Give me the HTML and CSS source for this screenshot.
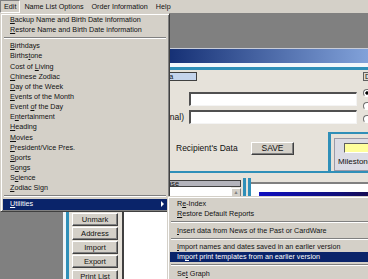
FILE: index.html
```html
<!DOCTYPE html>
<html lang="en">

<head>
  <meta charset="UTF-8" />
  <title>Edit - Utilities</title>
  <link rel="stylesheet" href="styles.css">
</head>

<body>
  <!-- 菜单栏 -->
  <div class="menubar">
    <span class="mb-item on">Edit</span>
    <span class="mb-item">Name List Options</span>
    <span class="mb-item">Order Information</span>
    <span class="mb-item">Help</span>
  </div>

  <!-- 背景里的窗口 -->
  <div class="desk">
    <div class="win">
      <div class="titlebar"></div>
      <div class="capline"></div>

      <div class="tabs">
        <span class="tab">Recipient Data</span>
        <span class="tab tab-d">D</span>
      </div>

      <div class="fields">
        <label class="lbl short">Name</label>
        <span class="input"></span>
        <div class="radios">
          <span class="radio sel"></span>
          <span class="radio"></span>
          <span class="radio"></span>
        </div>
        <label class="lbl">Name (Optional)</label>
        <span class="input"></span>
      </div>

      <div class="mid">
        <div class="recip">
          <span class="rlabel">Recipient's Data</span>
          <span class="btn save">SAVE</span>
        </div>
        <div class="milestone">
          <div class="ms-inner">
            <div class="yellow"></div>
            <div class="ms-text">Milestone</div>
          </div>
        </div>
      </div>

      <div class="lower">
        <div class="lp">
          <div class="btns">
            <span class="btn">Mark All</span>
            <span class="btn">Mark</span>
            <span class="btn">Unmark</span>
            <span class="btn">Address</span>
            <span class="btn">Import</span>
            <span class="btn">Export</span>
            <span class="btn">Print List</span>
          </div>
          <div class="list">
            <div class="list-head">Name Database</div>
            <div class="list-body">
              <div class="rows"></div>
              <div class="scroll"><span class="sb-btn">&#9650;</span></div>
            </div>
          </div>
        </div>
        <div class="rp">
          <div class="graph">
            <div class="bar"></div>
          </div>
        </div>
      </div>
    </div>
  </div>

  <!-- Edit 下拉菜单 -->
  <div class="menu dd">
    <div class="mi"><u>B</u>ackup Name and Birth Date information</div>
    <div class="mi"><u>R</u>estore Name and Birth Date information</div>
    <div class="sep"></div>
    <div class="mi"><u>B</u>irthdays</div>
    <div class="mi">Births<u>t</u>one</div>
    <div class="mi">Cost of <u>L</u>iving</div>
    <div class="mi"><u>C</u>hinese Zodiac</div>
    <div class="mi"><u>D</u>ay of the Week</div>
    <div class="mi"><u>E</u>vents of the Month</div>
    <div class="mi">Event <u>o</u>f the Day</div>
    <div class="mi">E<u>n</u>tertainment</div>
    <div class="mi"><u>H</u>eading</div>
    <div class="mi"><u>M</u>ovies</div>
    <div class="mi"><u>P</u>resident/Vice Pres.</div>
    <div class="mi"><u>S</u>ports</div>
    <div class="mi">S<u>o</u>ngs</div>
    <div class="mi">S<u>c</u>ience</div>
    <div class="mi"><u>Z</u>odiac Sign</div>
    <div class="sep"></div>
    <div class="mi hi arrow"><span><u>U</u>tilities</span><span class="tri"></span></div>
  </div>

  <!-- Utilities 子菜单 -->
  <div class="menu sub">
    <div class="mi">R<u>e</u>-Index</div>
    <div class="mi"><u>R</u>estore Default Reports</div>
    <div class="sep"></div>
    <div class="mi"><u>I</u>nsert data from News of the Past or CardWare</div>
    <div class="sep"></div>
    <div class="mi"><u>I</u>mport names and dates saved in an earlier version</div>
    <div class="mi hi">Im<u>p</u>ort print templates from an earlier version</div>
    <div class="sep"></div>
    <div class="mi">Se<u>t</u> Graph</div>
  </div>
</body>

</html>
```

FILE: styles.css
```css
* {
  margin: 0;
  padding: 0;
  box-sizing: border-box;
}

body {
  width: 368px;
  height: 279px;
  overflow: hidden;
  position: relative;
  background: #808080;
  font-family: "Liberation Sans", Arial, sans-serif;
  font-size: 7.2px;
  color: #111;
}

/* 菜单栏 */
.menubar {
  height: 13px;
  background: #d4d0c8;
  display: flex;
  align-items: center;
}

.mb-item {
  padding: 0 3px;
  border: 1px solid transparent;
  line-height: 11px;
  white-space: nowrap;
}

.mb-item.on {
  border-color: #808080 #fff #fff #808080;
}

/* 背景窗口 */
.desk {
  padding-top: 35px;
  padding-left: 63px;
}

.win {
  width: 330px;
  height: 240px;
  background: #e6e2da;
  border-left: 3px solid #eef4f8;
  border-top: 1px solid #c8ccd8;
  font-size: 8.5px;
}

.titlebar {
  height: 14px;
  background: linear-gradient(to right, #0a246a 25%, #8fb0e6 100%);
}

.capline {
  height: 7px;
  background: #f2f7fb;
  border-bottom: 3px solid #2f8fb8;
}

.tabs {
  display: flex;
  margin-top: 2px;
  height: 9px;
}

.tab {
  margin-left: 57px;
  width: 74px;
  background: #c4d4ec;
  border: 1px solid #404040;
  font-size: 7.2px;
  line-height: 7px;
  padding-left: 2px;
  white-space: nowrap;
  overflow: hidden;
}

.tab-d {
  margin-left: 166px;
  width: 12px;
  padding-left: 1px;
  background: #dcdad4;
  border-color: #606060;
}

.fields {
  display: grid;
  grid-template-columns: 118px 168px 12px;
  column-gap: 5px;
  row-gap: 4px;
  margin-top: 11px;
}

.lbl {
  text-align: right;
  line-height: 14px;
  white-space: nowrap;
}

.lbl.short {
  padding-right: 20px;
}

.input {
  height: 14px;
  background: #fff;
  border-top: 2px solid #505050;
  border-left: 2px solid #505050;
  border-right: 1px solid #f4f4f4;
  border-bottom: 1px solid #f4f4f4;
}

.radios {
  grid-column: 3;
  grid-row: 1 / span 2;
  display: flex;
  flex-direction: column;
  gap: 5px;
  margin-top: -3px;
  margin-left: 1px;
}

.radio {
  width: 8px;
  height: 8px;
  border-radius: 50%;
  border: 1px solid;
  border-color: #707070 #fff #fff #707070;
  background: #fff;
}

.radio.sel {
  background: radial-gradient(circle, #000 1.4px, #fff 1.9px);
}

/* 中间一行 */
.mid {
  display: flex;
  margin-top: 8px;
  height: 41px;
}

.recip {
  width: 262px;
  border-bottom: 2px solid #2f8fb8;
  display: flex;
  align-items: flex-start;
  padding: 10px 0 0 110px;
}

.rlabel {
  width: 75px;
  line-height: 13px;
  white-space: nowrap;
}

.btn {
  display: block;
  height: 13px;
  background: #d4d0c8;
  border: 1px solid;
  border-color: #fff #404040 #404040 #fff;
  box-shadow: inset -1px -1px #808080;
  text-align: center;
  line-height: 11px;
  white-space: nowrap;
}

.save {
  width: 43px;
}

.milestone {
  flex: 1;
  border-top: 2px solid #2f8fb8;
  border-left: 3px solid #2f8fb8;
  border-bottom: 2px solid #2f8fb8;
  padding: 4px 0 0 3px;
}

.ms-inner {
  height: 33px;
  background: #dcdce4;
  border: 1px solid #9a9aa8;
  padding: 4px 0 0 3px;
}

.yellow {
  margin-left: 6px;
  width: 40px;
  height: 10px;
  background: #ffff9c;
  border: 1px solid;
  border-color: #606060 #fff #fff #606060;
}

.ms-text {
  margin-top: 4px;
  font-size: 8px;
  line-height: 9px;
}

/* 下面两块 */
.lower {
  display: flex;
  margin-top: 5px;
  height: 110px;
}

.lp {
  width: 180px;
  border-left: 3px solid #2f8fb8;
  border-right: 3px solid #2f8fb8;
  display: flex;
  padding: 2px 2px 0 3px;
}

.btns {
  width: 46px;
  margin-top: 4px;
  display: flex;
  flex-direction: column;
  gap: 1.25px;
  font-size: 7.6px;
}

.list {
  margin-left: 4px;
  flex: 1;
  border-left: 2px solid #404040;
  background: #fff;
}

.list-head {
  height: 7px;
  background: #b4b4bc;
  border: 1px solid #404040;
  font-size: 7.2px;
  line-height: 5px;
  padding-left: 2px;
  white-space: nowrap;
  overflow: hidden;
}

.list-body {
  display: flex;
  height: 100px;
}

.rows {
  flex: 1;
}

.scroll {
  width: 10px;
  background: #e8e6e0;
  padding-top: 1px;
}

.sb-btn {
  display: block;
  height: 9px;
  background: #d4d0c8;
  border: 1px solid;
  border-color: #fff #808080 #808080 #fff;
  color: #808080;
  font-size: 5px;
  line-height: 7px;
  text-align: center;
}

.rp {
  margin-left: 2px;
  flex: 1;
  border-left: 3px solid #2f8fb8;
  padding-top: 4px;
}

.graph {
  height: 100px;
  background: #fff;
  border-top: 2px solid #808080;
  padding: 8px 0 0 8px;
}

.bar {
  height: 5px;
  background: linear-gradient(to right, #1010c0, #10107a 60%, #1a0830);
}

/* 弹出菜单 */
.menu {
  position: absolute;
  background: #d4d0c8;
  border: 1px solid;
  border-color: #d4d0c8 #404040 #404040 #d4d0c8;
  box-shadow: inset 1px 1px #fff, inset -1px -1px #808080;
  padding: 1px 2px;
}

.mi {
  height: 10.15px;
  line-height: 10px;
  padding-left: 7px;
  white-space: nowrap;
}

.mi.hi {
  background: #0a246a;
  color: #fff;
}

.arrow {
  display: flex;
  align-items: center;
  justify-content: space-between;
  padding-right: 3px;
}

.tri {
  width: 0;
  height: 0;
  border-left: 3px solid #fff;
  border-top: 3px solid transparent;
  border-bottom: 3px solid transparent;
}

.sep {
  height: 6px;
  padding-top: 2px;
}

.sep::before {
  content: "";
  display: block;
  margin: 0 1px;
  border-top: 1px solid #808080;
  border-bottom: 1px solid #fff;
}

.dd {
  left: 0;
  top: 13px;
  width: 170px;
}

.sub {
  left: 167px;
  top: 196px;
  width: 230px;
  height: 100px;
  padding-top: 2px;
}

.sub .mi {
  height: 9.8px;
}

.sub .sep {
  height: 7px;
  padding-top: 2.5px;
}
```
